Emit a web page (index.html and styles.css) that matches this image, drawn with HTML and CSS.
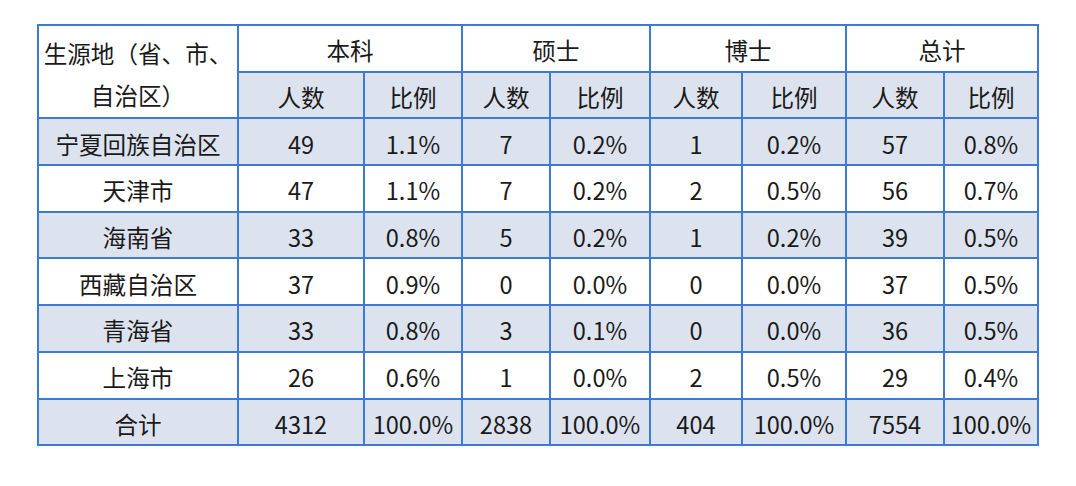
FILE: index.html
```html
<!DOCTYPE html>
<html lang="zh-CN">
<head>
<meta charset="utf-8">
<title>生源地统计</title>
<link rel="stylesheet" href="styles.css">
</head>
<body>
<div class="wrap">
<table class="stats">
  <colgroup>
    <col class="c-region">
    <col class="c1"><col class="c2">
    <col class="c3"><col class="c4">
    <col class="c5"><col class="c6">
    <col class="c7"><col class="c8">
  </colgroup>
  <thead>
    <tr>
      <th rowspan="2" class="region-head">生源地（省、市、自治区）</th>
      <th colspan="2">本科</th>
      <th colspan="2">硕士</th>
      <th colspan="2">博士</th>
      <th colspan="2">总计</th>
    </tr>
    <tr class="shade">
      <th>人数</th><th>比例</th>
      <th>人数</th><th>比例</th>
      <th>人数</th><th>比例</th>
      <th>人数</th><th>比例</th>
    </tr>
  </thead>
  <tbody>
    <tr class="shade"><td>宁夏回族自治区</td><td>49</td><td>1.1%</td><td>7</td><td>0.2%</td><td>1</td><td>0.2%</td><td>57</td><td>0.8%</td></tr>
    <tr><td>天津市</td><td>47</td><td>1.1%</td><td>7</td><td>0.2%</td><td>2</td><td>0.5%</td><td>56</td><td>0.7%</td></tr>
    <tr class="shade"><td>海南省</td><td>33</td><td>0.8%</td><td>5</td><td>0.2%</td><td>1</td><td>0.2%</td><td>39</td><td>0.5%</td></tr>
    <tr><td>西藏自治区</td><td>37</td><td>0.9%</td><td>0</td><td>0.0%</td><td>0</td><td>0.0%</td><td>37</td><td>0.5%</td></tr>
    <tr class="shade"><td>青海省</td><td>33</td><td>0.8%</td><td>3</td><td>0.1%</td><td>0</td><td>0.0%</td><td>36</td><td>0.5%</td></tr>
    <tr><td>上海市</td><td>26</td><td>0.6%</td><td>1</td><td>0.0%</td><td>2</td><td>0.5%</td><td>29</td><td>0.4%</td></tr>
    <tr class="shade"><td>合计</td><td>4312</td><td>100.0%</td><td>2838</td><td>100.0%</td><td>404</td><td>100.0%</td><td>7554</td><td>100.0%</td></tr>
  </tbody>
</table>
</div>
</body>
</html>
```
FILE: styles.css
```css
html, body {
  margin: 0;
  padding: 0;
  background: #ffffff;
}

body {
  font-family: "Noto Sans CJK SC", "Noto Sans", sans-serif;
  color: #1a1a1a;
}

.wrap {
  padding: 24px 0 0 37px;
}

.stats {
  border-collapse: collapse;
  table-layout: fixed;
  width: 1002px;
  font-size: 23.6px;
}

.c-region { width: 200px; }
.c1 { width: 126px; }
.c2 { width: 98px; }
.c3 { width: 88px; }
.c4 { width: 100px; }
.c5 { width: 92px; }
.c6 { width: 104px; }
.c7 { width: 98px; }
.c8 { width: 94px; }

.stats th,
.stats td {
  border: 2.5px solid #3b7bd4;
  height: 40.7px;
  padding: 4px 0 0 0;
  text-align: center;
  vertical-align: middle;
  font-weight: normal;
  line-height: 28px;
  white-space: nowrap;
}

.stats th.region-head {
  white-space: normal;
  line-height: 42px;
  padding: 5px 0 0 0;
}

.shade th,
.shade td {
  background: #dce3ef;
}
```
